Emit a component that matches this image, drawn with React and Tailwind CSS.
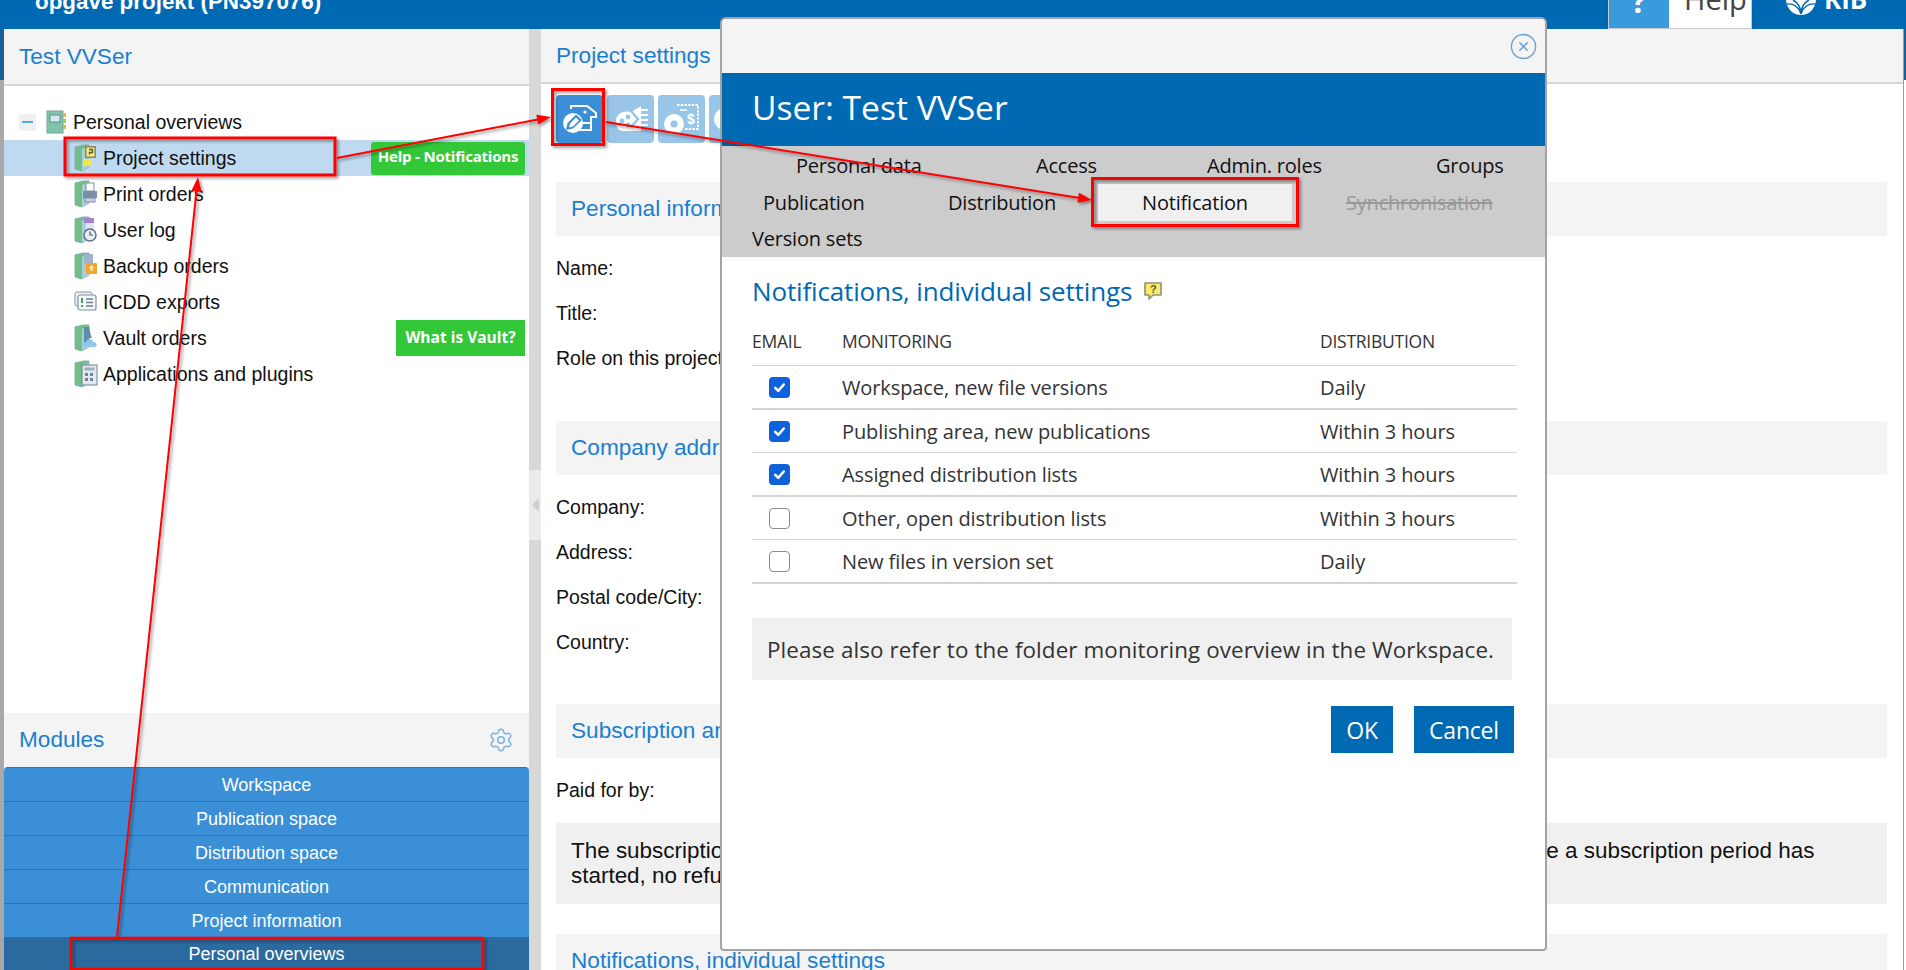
import React from 'react';
import { Settings, CircleX } from 'lucide-react';

const OPEN = "font-['Open_Sans',sans-serif]";

const TREE = [
  { label: 'Print orders', kind: 'print' },
  { label: 'User log', kind: 'log' },
  { label: 'Backup orders', kind: 'backup' },
  { label: 'ICDD exports', kind: 'icdd' },
  { label: 'Vault orders', kind: 'vault', badge: 'What is Vault?' },
  { label: 'Applications and plugins', kind: 'apps' },
];

const MODULES = ['Workspace', 'Publication space', 'Distribution space', 'Communication', 'Project information'];

const NOTIFY = [
  { on: true, name: 'Workspace, new file versions', dist: 'Daily', h: 'h-[44px] border-b-2' },
  { on: true, name: 'Publishing area, new publications', dist: 'Within 3 hours', h: 'h-[43px] border-b' },
  { on: true, name: 'Assigned distribution lists', dist: 'Within 3 hours', h: 'h-[44px] border-b-2' },
  { on: false, name: 'Other, open distribution lists', dist: 'Within 3 hours', h: 'h-[43px] border-b' },
  { on: false, name: 'New files in version set', dist: 'Daily', h: 'h-[44px] border-b-2' },
];

// green binder with a small picture on top, one per tree entry
const BookIcon = ({ kind }) => (
  <svg width="24" height="28" viewBox="0 0 24 28" className="shrink-0">
    <path d="M1 3 L9 1 L15 1 L15 23 L8 27 L1 25 Z" fill="#8fc7b4" stroke="#7f9f9a" strokeWidth="0.8" />
    <path d="M1 3 L15 1 L15 3 L8 5 L8 27 L1 25 Z" fill="#6fbf8a" />
    <path d="M8 5 L15 3 L15 23 L8 27 Z" fill="#a9cfd8" />
    {kind === 'project' && (
      <g>
        <rect x="11" y="2" width="11" height="12" fill="#8a8a60" />
        <rect x="12.5" y="3.5" width="8" height="9" fill="#f7ec6a" />
        <rect x="9" y="15" width="8" height="7" fill="#f3e34c" />
        <path d="M15 5.5 h3.5 v3 h-3 v2" stroke="#555" strokeWidth="1.4" fill="none" />
      </g>
    )}
    {kind === 'print' && (
      <g>
        <rect x="12" y="3" width="8" height="8" fill="#fff" stroke="#7d8ea8" />
        <rect x="9" y="11" width="14" height="7" fill="#7d8ea8" />
        <rect x="11" y="18" width="10" height="4" fill="#c9d2de" stroke="#7d8ea8" />
      </g>
    )}
    {kind === 'log' && (
      <g>
        <rect x="10" y="2" width="10" height="5" fill="#a184d6" />
        <rect x="12" y="7" width="8" height="7" fill="#dfe5ee" />
        <circle cx="16" cy="19" r="6" fill="#e8edf3" stroke="#5d6d88" strokeWidth="1.4" />
        <path d="M16 15.5 V19 H19" stroke="#4d5d78" strokeWidth="1.2" fill="none" />
      </g>
    )}
    {kind === 'backup' && (
      <g>
        <rect x="10" y="2" width="9" height="11" fill="#9db4cc" />
        <rect x="12" y="11" width="11" height="11" rx="1" fill="#f4a62c" />
        <path d="M17.5 13 L20 16 H18.5 V19 H16.5 V16 H15 Z" fill="#fff3d0" />
      </g>
    )}
    {kind === 'vault' && (
      <g>
        <path d="M10 3 H15 L17 12 L18 14 H15 V20 H10 Z" fill="#5f8fa8" />
        <path d="M11 23 C8 23 8 18 12 18 C13 14 19 15 19 18 C23 18 24 23 21 23 Z" fill="#8ac8ef" />
      </g>
    )}
    {kind === 'apps' && (
      <g>
        <rect x="8" y="5" width="15" height="20" fill="#e3e9ef" stroke="#6e8296" />
        <rect x="10.5" y="7.5" width="10" height="3" fill="#9db0c2" />
        <path d="M11 13 h3 v3 h-3 Z M16 13 h3 v3 h-3 Z M11 18 h3 v3 h-3 Z M16 18 h3 v3 h-3 Z" fill="#6e8296" />
      </g>
    )}
  </svg>
);

const OverviewIcon = () => (
  <svg width="20" height="24" viewBox="0 0 20 24" className="shrink-0">
    <rect x="1" y="1" width="16" height="22" fill="#7fc4a8" stroke="#7f9f9a" />
    <rect x="4" y="5" width="10" height="7" fill="#d6e8ef" stroke="#5f8f8f" />
    <path d="M17 3 h3 v4 h-3 Z" fill="#e7b93a" />
    <path d="M17 9 h3 v4 h-3 Z" fill="#9ccf55" />
    <path d="M17 15 h3 v4 h-3 Z" fill="#e7b93a" />
  </svg>
);

const IcddIcon = () => (
  <svg width="24" height="24" viewBox="0 0 24 24" className="shrink-0">
    <rect x="1" y="2" width="17" height="14" rx="2" fill="#eef1f5" stroke="#8b96a8" />
    <rect x="4" y="5" width="18" height="15" rx="2" fill="#f6f7f9" stroke="#7d8ea8" strokeWidth="1.2" />
    <path d="M8 8 v5 M8 15 v2" stroke="#3f9f5f" strokeWidth="2" />
    <path d="M12 9 h7 M12 12.5 h7 M12 16 h7" stroke="#6f7f96" strokeWidth="1.4" />
  </svg>
);

const Tool1 = () => (
  <svg width="36" height="32" viewBox="0 0 36 32" fill="none">
    <path d="M9 6 L9 3 H25 L34 10 V14 H29 V27 H15" stroke="#fff" strokeWidth="2" />
    <path d="M20 20 H29" stroke="#fff" strokeWidth="2" />
    <circle cx="11" cy="20" r="10" fill="#fff" />
    <path d="M4 27 L5.5 20 L14 11.5 L20 17 L11 25.5 Z" fill="#3a8fd6" />
    <path d="M7 24.5 L8 20.5 L14 14.5 L17 17.5 L11 23.5 Z" fill="#fff" />
    <circle cx="23" cy="9" r="1.6" fill="#fff" />
  </svg>
);

const Tool2 = () => (
  <svg width="36" height="32" viewBox="0 0 36 32" fill="none">
    <path d="M3 18 C3 10 12 7 18 9 L28 3 V28 H10 C5 28 3 24 3 18 Z" fill="#fff" />
    <circle cx="9" cy="18" r="2.4" fill="#99c5e8" />
    <circle cx="15" cy="14" r="2.4" fill="#99c5e8" />
    <circle cx="15" cy="22" r="2.4" fill="#99c5e8" />
    <path d="M18 8 L25 16 L18 24" stroke="#99c5e8" strokeWidth="2.4" />
    <path d="M26 7 H35 M27 12 H35 M27 17 H35 M26 22 H35" stroke="#fff" strokeWidth="1.8" />
  </svg>
);

const Tool3 = () => (
  <svg width="38" height="34" viewBox="0 0 38 34" fill="none">
    <path d="M14 3 H35 V27 H22" stroke="#fff" strokeWidth="1.8" strokeDasharray="2.5 1.2" />
    <path d="M17 8 H24" stroke="#fff" strokeWidth="1.6" />
    <circle cx="11" cy="22" r="10" fill="#fff" />
    <circle cx="11" cy="22" r="3.6" fill="#99c5e8" />
    <text x="24" y="22" fontSize="14" fontWeight="700" fill="#fff" fontFamily="Liberation Sans, sans-serif">$</text>
  </svg>
);

const Arrow = ({ x1, y1, x2, y2 }) => {
  const a = Math.atan2(y2 - y1, x2 - x1);
  const p = (len, off) => {
    const x = x2 - len * Math.cos(a) - off * Math.sin(a);
    const y = y2 - len * Math.sin(a) + off * Math.cos(a);
    return `${x},${y}`;
  };
  return (
    <g>
      <line x1={x1} y1={y1} x2={p(8, 0).split(',')[0]} y2={p(8, 0).split(',')[1]} stroke="#ff0000" strokeWidth="2" />
      <polygon points={`${x2},${y2} ${p(14, 5)} ${p(14, -5)}`} fill="#ff0000" />
    </g>
  );
};

const Annotations = () => (
  <svg width="1906" height="970" className="absolute left-0 top-0 z-20 pointer-events-none">
    <defs>
      <filter id="shade" x="-5%" y="-5%" width="110%" height="110%">
        <feDropShadow dx="2" dy="2" stdDeviation="1.6" floodColor="#000" floodOpacity="0.4" />
      </filter>
    </defs>
    <g filter="url(#shade)">
      <Arrow x1={337} y1={158} x2={551} y2={117} />
      <Arrow x1={606} y1={122} x2={1092} y2={200} />
      <Arrow x1={117} y1={937} x2={198} y2={177} />
      <rect x="65" y="138" width="270" height="37" fill="none" stroke="#ff0000" strokeWidth="3" />
      <rect x="552.5" y="89.5" width="51" height="55" fill="none" stroke="#ff0000" strokeWidth="3" />
      <rect x="1092.5" y="178.5" width="205" height="47" fill="none" stroke="#ff0000" strokeWidth="3" />
      <rect x="71" y="938" width="412" height="31" fill="none" stroke="#ff0000" strokeWidth="2.5" />
    </g>
  </svg>
);

const Heading = ({ children, className }) => (
  <div className={`bg-[#f4f4f4] h-[54px] flex items-center pl-[15px] text-[22.6px] text-[#1a7fd0] whitespace-nowrap overflow-hidden ${className}`}>{children}</div>
);

const Field = ({ children, className }) => (
  <div className={`text-[19.5px] text-[#111] leading-[24px] ${className}`}>{children}</div>
);

const Check = ({ on }) => (
  on ? (
    <div className="w-[21px] h-[21px] rounded-[4px] bg-[#0d61dc] flex items-center justify-center">
      <svg width="17" height="17" viewBox="0 0 20 20" fill="none">
        <path d="M5 10.5 L8.5 14 L15 6.5" stroke="#fff" strokeWidth="3" strokeLinecap="round" strokeLinejoin="round" />
      </svg>
    </div>
  ) : (
    <div className="w-[21px] h-[21px] rounded-[4px] bg-white border border-[#8a8a8a]" />
  )
);

const Modal = () => (
  <div className={`absolute left-[720px] top-[17px] w-[827px] h-[934px] z-10 bg-white border-[2.5px] border-[#a3a3a3] rounded-t-[6px] rounded-b-[4px] overflow-hidden ${OPEN}`}>
    <div className="h-[54px] bg-[#f4f4f4] flex items-center justify-end pr-[7px] pt-[1px]">
      <CircleX size={29} strokeWidth={1.2} className="text-[#6aa5da]" />
    </div>
    <div className="h-[73px] bg-[#0069b4] flex items-center pl-[30px] pb-[4px] text-[33.6px] text-white">User: Test VVSer</div>
    <div className="h-[111px] bg-[#cccccc] text-[20px] text-[#111] tracking-[-0.2px] pt-[6px]">
      <div className="flex h-[28px] items-center pl-[74px]">
        <span className="w-[240px]">Personal data</span>
        <span className="w-[171px]">Access</span>
        <span className="w-[229px]">Admin. roles</span>
        <span>Groups</span>
      </div>
      <div className="flex h-[37px] mt-[4px] items-center pl-[41px]">
        <span className="w-[185px]">Publication</span>
        <span className="w-[150px]">Distribution</span>
        <span className="w-[194px] h-[37px] bg-[#f0f0f0] flex items-center justify-center">Notification</span>
        <span className="ml-[54px] text-[#999] line-through">Synchronisation</span>
      </div>
      <div className="h-[34px] flex items-center pl-[30px] pt-[2px]">Version sets</div>
    </div>
    <div className="pl-[30px] pr-[28px]">
      <div className="h-[70px] pb-[2px] flex items-center gap-[11px] text-[26px] text-[#0069b4] tracking-[-0.15px]">
        Notifications, individual settings
        <svg width="20" height="20" viewBox="0 0 20 20">
          <path d="M2 2 H18 V14 H10 L6 18 V14 H2 Z" fill="#f8ec6a" stroke="#8f9078" strokeWidth="1.6" strokeLinejoin="round" />
          <text x="7" y="12" fontSize="11" fontWeight="700" fill="#555" fontFamily="Liberation Sans, sans-serif">?</text>
        </svg>
      </div>
      <div className="h-[39px] pb-[10px] flex items-center border-b border-[#d5d5d5] text-[17.5px] text-[#333] tracking-[-0.25px]">
        <span className="w-[90px]">EMAIL</span>
        <span className="w-[478px]">MONITORING</span>
        <span>DISTRIBUTION</span>
      </div>
      {NOTIFY.map((row) => (
        <div key={row.name} className={`flex items-center border-[#d5d5d5] text-[20px] text-[#333] tracking-[-0.1px] ${row.h}`}>
          <div className="w-[90px] pl-[17px]"><Check on={row.on} /></div>
          <span className="w-[478px] pt-[2px]">{row.name}</span>
          <span className="pt-[2px]">{row.dist}</span>
        </div>
      ))}
      <div className="mt-[34px] h-[62px] w-[760px] bg-[#f0f0f0] flex items-center pl-[15px] pt-[2px] text-[22.4px] text-[#333] tracking-[0.1px] whitespace-nowrap">
        Please also refer to the folder monitoring overview in the Workspace.
      </div>
      <div className="mt-[26px] flex justify-end gap-[21px] pr-[3px] text-[23px] text-white tracking-[-0.2px]">
        <div className="w-[62px] h-[47px] pt-[1px] bg-[#0069b4] flex items-center justify-center">OK</div>
        <div className="w-[100px] h-[47px] pt-[1px] bg-[#0069b4] flex items-center justify-center">Cancel</div>
      </div>
    </div>
  </div>
);

const TopBar = () => (
  <div className="h-[29px] bg-[#0069b4] flex justify-between overflow-hidden shrink-0">
    <div className="pl-[35px] self-end mb-[13px] text-[22.4px] leading-[28px] font-bold text-white whitespace-nowrap">opgave projekt (PN397076)</div>
    <div className="flex items-start">
      <div className={`flex h-[29px] border-x border-b border-[#c8c8c8] shadow-md ${OPEN}`}>
        <div className="w-[60px] bg-[#3a9bdc] flex justify-center items-end pb-[11px] text-[32px] leading-none font-bold text-white">?</div>
        <div className="w-[82px] bg-white flex items-end pb-[15px] pl-[15px] text-[29px] leading-none text-[#444]">Help</div>
      </div>
      <div className="w-[154px] h-[29px] flex items-start pl-[33px] gap-[7px]">
        <svg width="32" height="16" viewBox="0 0 32 16" className="shrink-0">
          <path d="M1 0 C2 9 8 15 16 15 C24 15 30 9 31 0 Z" fill="#fff" />
          <path d="M2 4 C8 3 14 7 16 14 M30 4 C24 3 18 7 16 14 M8 0 C12 2 15 6 16 12 M24 0 C20 2 17 6 16 12" stroke="#0069b4" strokeWidth="1.4" fill="none" />
        </svg>
        <span className={`text-[26px] leading-none font-bold text-white -mt-[14px] ${OPEN}`}>RIB</span>
      </div>
    </div>
  </div>
);

const Sidebar = () => (
  <div className="w-[525px] flex flex-col bg-white">
    <div className="h-[57px] bg-[#f4f4f4] border-b-2 border-[#d6d6d6] flex items-center pl-[15px] text-[22.6px] text-[#1a7fd0]">Test VVSer</div>
    <div className="flex-1 pt-[18px] text-[19.5px] text-[#111]">
      <div className="h-[36px] flex items-center pl-[15px]">
        <div className="w-[17px] h-[17px] bg-[#f0f0f0] flex items-center justify-center mr-[10px]">
          <div className="w-[11px] h-[2px] bg-[#5aa5dc]" />
        </div>
        <OverviewIcon />
        <span className="ml-[7px] pt-[1px]">Personal overviews</span>
      </div>
      <div className="h-[36px] bg-[#bfdaf0] flex items-center pl-[70px] pr-[4px]">
        <BookIcon kind="project" />
        <span className="ml-[5px] pt-[1px] flex-1">Project settings</span>
        <div className={`w-[154px] h-[33px] pb-[3px] rounded-[3px] bg-[#33c837] flex items-center justify-center text-[15px] font-bold text-white tracking-[-0.2px] ${OPEN}`}>Help - Notifications</div>
      </div>
      {TREE.map((item) => (
        <div key={item.label} className="h-[36px] flex items-center pl-[70px] pr-[4px]">
          {item.kind === 'icdd' ? <IcddIcon /> : <BookIcon kind={item.kind} />}
          <span className="ml-[5px] pt-[1px] flex-1">{item.label}</span>
          {item.badge && (
            <div className={`w-[129px] h-[36px] bg-[#33c837] flex items-center justify-center text-[15.5px] font-bold text-white ${OPEN}`}>{item.badge}</div>
          )}
        </div>
      ))}
    </div>
    <div className="h-[54px] bg-[#f4f4f4] flex items-center justify-between pl-[15px] pr-[15px] text-[22.6px] text-[#1a7fd0]">
      Modules
      <Settings size={26} strokeWidth={1.4} className="text-[#7fb0e0]" />
    </div>
    <div className="text-[18px] text-white text-center">
      {MODULES.map((m, i) => (
        <div key={m} className={`h-[34px] pt-[1px] flex items-center justify-center bg-[#3a8fd6] border-t border-[#1f78c4] ${i === 0 ? 'rounded-t-[4px]' : ''}`}>{m}</div>
      ))}
      <div className="h-[33px] pt-[1px] flex items-center justify-center bg-[#2a6a9e]">Personal overviews</div>
    </div>
  </div>
);

const Main = () => (
  <div className="flex-1 bg-white overflow-hidden">
    <div className="h-[55px] bg-[#f4f4f4] border-b-2 border-[#d6d6d6] flex items-center pl-[15px] text-[22.6px] text-[#1a7fd0]">Project settings</div>
    <div className="pl-[15px] pr-[16px]">
      <div className="flex gap-[4px] mt-[11px] h-[48px]">
        <div className="w-[47px] h-[48px] rounded-[4px] bg-[#3a8fd6] flex items-center justify-center"><Tool1 /></div>
        <div className="w-[47px] h-[48px] rounded-[4px] bg-[#99c5e8] flex items-center justify-center"><Tool2 /></div>
        <div className="w-[47px] h-[48px] rounded-[4px] bg-[#99c5e8] flex items-center justify-center"><Tool3 /></div>
        <div className="w-[47px] h-[48px] rounded-[4px] bg-[#99c5e8] flex items-center pl-[5px]">
          <div className="w-[22px] h-[22px] rounded-full border-[6px] border-white" />
        </div>
      </div>
      <Heading className="mt-[39px]">Personal information</Heading>
      <Field className="mt-[20px]">Name:</Field>
      <Field className="mt-[21px]">Title:</Field>
      <Field className="mt-[21px]">Role on this project:</Field>
      <Heading className="mt-[51px]">Company address</Heading>
      <Field className="mt-[20px]">Company:</Field>
      <Field className="mt-[21px]">Address:</Field>
      <Field className="mt-[21px]">Postal code/City:</Field>
      <Field className="mt-[21px]">Country:</Field>
      <Heading className="mt-[50px]">Subscription and payment</Heading>
      <Field className="mt-[20px]">Paid for by:</Field>
      <div className="mt-[21px] h-[81px] bg-[#f0f0f0] pl-[15px] pt-[15px] text-[22.44px] leading-[25px] text-[#111] whitespace-nowrap">
        The subscription is paid per year and runs automatically unless it is cancelled before renewal. Once a subscription period has<br />
        started, no refund can be given for the remaining period.
      </div>
      <Heading className="mt-[30px]">Notifications, individual settings</Heading>
    </div>
  </div>
);

export default function App() {
  return (
    <div className="relative w-[1906px] h-[970px] overflow-hidden bg-white flex flex-col font-['Liberation_Sans',sans-serif]">
      <TopBar />
      <div className="flex flex-1 min-h-0">
        <div className="w-[4px] bg-[#a8a8a8]">
          <div className="h-[51px] bg-[#1a5f96]" />
        </div>
        <Sidebar />
        <div className="w-[12px] bg-[#d8d8d8] pt-[441px]">
          <div className="h-[70px] bg-[#ebebeb] flex items-center justify-center">
            <div className="w-0 h-0 border-y-[7px] border-y-transparent border-r-[7px] border-r-[#cfcfcf]" />
          </div>
        </div>
        <Main />
        <div className="w-[3px] bg-white border-l border-[#9a9a9a]">
          <div className="h-[51px] bg-[#1a5f96]" />
        </div>
      </div>
      <Modal />
      <Annotations />
    </div>
  );
}
